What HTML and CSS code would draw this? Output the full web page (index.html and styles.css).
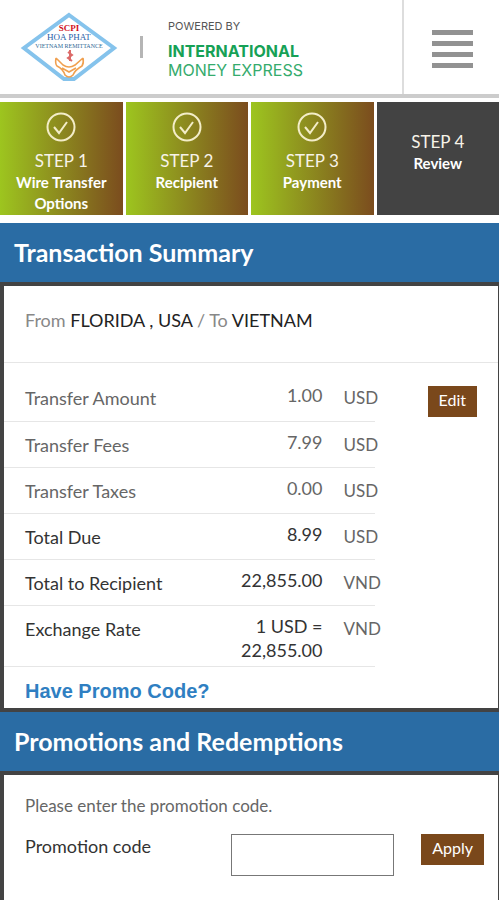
FILE: index.html
```html
<!DOCTYPE html>
<html lang="en">
<head>
  <meta charset="UTF-8">
  <meta name="viewport" content="width=device-width, initial-scale=1.0">
  <title>Review - Transaction Summary</title>
  <link rel="stylesheet" href="styles.css">
</head>
<body>
  <header class="header">
    <a href="#" class="brand">
      <svg class="logo" viewBox="0 0 98 70" role="img" aria-label="SCPI Hoa Phat Vietnam Remittance">
        <path d="M49 3 L94 36 L54 67 H44 L4 36 Z" fill="#fff" stroke="#85c3ec" stroke-width="4"/>
        <text x="49" y="19" class="logo-red">SCPI</text>
        <text x="49" y="28" class="logo-blue">HOA PHAT</text>
        <text x="49" y="36" class="logo-small">VIETNAM REMITTANCE</text>
        <path d="M50 38 v11 M48 40 l4 3 l-4 3 l4 3" fill="none" stroke="#dc6a68" stroke-width="2"/>
        <path d="M36 46 l7 7 q6 4 12 0 l8 -7 M36 46 q-1 6 1 8 q6 3 8 9 q4 4 8 0 q2 -5 9 -9 q2 -3 1 -8 M42 56 l7 4 l7 -4" fill="none" stroke="#f0a050" stroke-width="1.6"/>
      </svg>
      <span class="divider"></span>
      <span class="powered">
        <span class="powered-by">POWERED BY</span>
        <strong>INTERNATIONAL</strong>
        <span>MONEY EXPRESS</span>
      </span>
    </a>
    <button type="button" class="menu" aria-label="Menu">
      <span></span><span></span><span></span><span></span>
    </button>
  </header>

  <!-- Steps -->
  <ol class="steps">
    <li class="step">
      <svg class="check" viewBox="0 0 30 30"><circle cx="15" cy="15" r="13.5"/><path d="M8 15 L13 21 L21 10"/></svg>
      <span>STEP 1</span>
      <strong>Wire Transfer Options</strong>
    </li>
    <li class="step">
      <svg class="check" viewBox="0 0 30 30"><circle cx="15" cy="15" r="13.5"/><path d="M8 15 L13 21 L21 10"/></svg>
      <span>STEP 2</span>
      <strong>Recipient</strong>
    </li>
    <li class="step">
      <svg class="check" viewBox="0 0 30 30"><circle cx="15" cy="15" r="13.5"/><path d="M8 15 L13 21 L21 10"/></svg>
      <span>STEP 3</span>
      <strong>Payment</strong>
    </li>
    <li class="step current">
      <span>STEP 4</span>
      <strong>Review</strong>
    </li>
  </ol>

  <main>
    <section>
      <h2 class="title">Transaction Summary</h2>
      <div class="panel">
        <p class="route">From <b>FLORIDA , USA</b> / To <b>VIETNAM</b></p>
        <div class="summary">
          <table class="amounts">
            <tr><th scope="row">Transfer Amount</th><td class="value">1.00</td><td class="unit">USD</td></tr>
            <tr><th scope="row">Transfer Fees</th><td class="value">7.99</td><td class="unit">USD</td></tr>
            <tr><th scope="row">Transfer Taxes</th><td class="value">0.00</td><td class="unit">USD</td></tr>
            <tr class="total"><th scope="row">Total Due</th><td class="value">8.99</td><td class="unit">USD</td></tr>
            <tr class="total"><th scope="row">Total to Recipient</th><td class="value">22,855.00</td><td class="unit">VND</td></tr>
            <tr class="total"><th scope="row">Exchange Rate</th><td class="value">1 USD =<br>22,855.00</td><td class="unit">VND</td></tr>
          </table>
          <button type="button" class="button edit">Edit</button>
        </div>
        <a href="#promo" class="promo-link">Have Promo Code?</a>
      </div>
    </section>

    <section id="promo">
      <h2 class="title">Promotions and Redemptions</h2>
      <div class="panel">
        <form class="promo">
          <p>Please enter the promotion code.</p>
          <div class="promo-row">
            <label for="code">Promotion code</label>
            <input type="text" id="code">
            <button type="button" class="button">Apply</button>
          </div>
        </form>
      </div>
    </section>
  </main>
</body>
</html>
```

FILE: styles.css
```css
* {
  box-sizing: border-box;
}
body {
  margin: 0;
  font-family: Lato, sans-serif;
  font-size: 18px;
  line-height: 24px;
  color: #333;
  background: #fff;
}

/* Header */
.header {
  display: flex;
  justify-content: space-between;
  border-bottom: 4px solid #ccc;
}
.brand {
  display: flex;
  align-items: center;
  padding: 12px 0 12px 20px;
  text-decoration: none;
}
.logo {
  width: 98px;
  height: 70px;
}
.logo text {
  font-family: "Liberation Serif", serif;
  font-weight: bold;
  text-anchor: middle;
}
.logo .logo-red {
  font-size: 9px;
  fill: #d0101c;
}
.logo .logo-blue {
  font-size: 9px;
  font-weight: normal;
  fill: #2860a8;
}
.logo .logo-small {
  font-size: 6px;
  font-weight: normal;
  fill: #2f6a96;
}
.divider {
  width: 3px;
  height: 22px;
  margin: 0 25px 0 22px;
  background: #b5b5b5;
}
.powered {
  display: flex;
  flex-direction: column;
  padding-top: 3px;
  font-family: Inter, sans-serif;
  font-size: 16px;
  line-height: 19px;
  color: #35ab6d;
}
.powered strong {
  color: #16a156;
}
.powered .powered-by {
  margin-bottom: 6px;
  font-size: 11px;
  color: #555;
}
.menu {
  display: flex;
  flex-direction: column;
  justify-content: center;
  gap: 6px;
  width: 97px;
  padding: 4px 26px 0 28px;
  border: 0;
  border-left: 2px solid #ddd;
  background: none;
}
.menu span {
  height: 5px;
  background: #929292;
}

/* Steps */
.steps {
  display: grid;
  grid-template-columns: repeat(4, 1fr);
  gap: 3px;
  margin: 4px 0 8px;
  padding: 0;
  list-style: none;
}
.step {
  display: flex;
  flex-direction: column;
  align-items: center;
  min-height: 113px;
  padding: 10px 12px 0;
  font-size: 17px;
  line-height: 22px;
  text-align: center;
  color: #f7f3e8;
  background: linear-gradient(to right, #9dc51f, #7b4c1e);
}
.step strong {
  font-size: 15px;
  line-height: 21px;
  color: #fff;
}
.step.current {
  padding-top: 29px;
  background: #434343;
}
.check {
  width: 30px;
  height: 30px;
  margin-bottom: 8px;
  fill: none;
  stroke: #f3edc8;
  stroke-width: 2;
}

/* Sections */
.title {
  margin: 0;
  padding: 14px 14px 15px;
  font-size: 25px;
  line-height: 30px;
  color: #fff;
  background: #2a6ca4;
}
.panel {
  border: solid #434343;
  border-width: 4px 1px 4px 4px;
}
.route {
  margin: 0;
  padding: 22px 21px 30px;
  color: #888;
  border-bottom: 1px solid #e6e6e6;
}
.route b {
  font-weight: normal;
  color: #222;
}
.summary {
  display: flex;
  justify-content: space-between;
  align-items: flex-start;
  padding-top: 12px;
}
.amounts {
  width: 75%;
  table-layout: fixed;
  border-collapse: collapse;
  color: #666;
}
.amounts th,
.amounts td {
  height: 46px;
  padding: 11px 0 10px;
  vertical-align: top;
  font-weight: normal;
  white-space: nowrap;
  border-bottom: 1px solid #e6e6e6;
}
.amounts th {
  padding-left: 21px;
  text-align: left;
}
.amounts .value {
  padding: 8px 0 4px;
  text-align: right;
}
.amounts .unit {
  width: 52px;
  padding-left: 21px;
  font-size: 17px;
}
.amounts th:first-child {
  width: 50%;
}
.total th,
.total .value {
  color: #333;
}
.button {
  padding: 0 11px 4px;
  border: 0;
  font-family: inherit;
  font-size: 16px;
  line-height: 27px;
  color: #fff;
  background: #7a481b;
}
.edit {
  margin: 11px 21px 0 0;
}
.promo-link {
  display: block;
  padding: 12px 21px 5px;
  font-family: "Liberation Sans", sans-serif;
  font-size: 20px;
  font-weight: bold;
  color: #2f7fc2;
  text-decoration: none;
}

/* Promotion form */
.promo {
  padding: 19px 14px 28px 21px;
}
.promo p {
  margin: 0 0 16px;
  font-size: 17px;
  color: #666;
}
.promo-row {
  display: flex;
  align-items: flex-start;
}
.promo-row label {
  width: 206px;
}
.promo-row input {
  flex: 1;
  min-width: 0;
  height: 42px;
  margin-right: 27px;
  border: 1px solid #777;
  font-size: 16px;
}
```
